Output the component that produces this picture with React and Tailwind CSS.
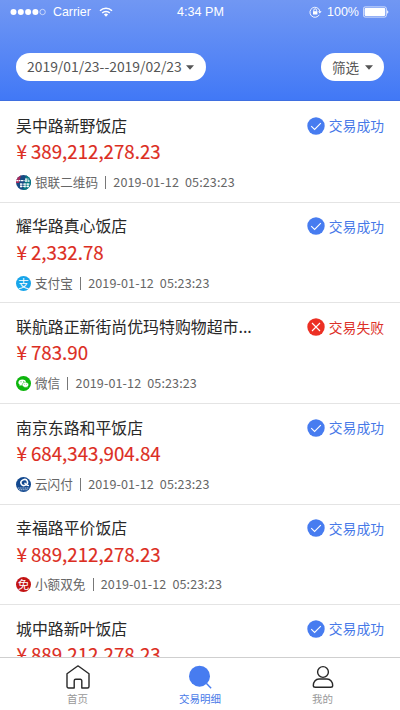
const transactions = [
  { id: 1, shop: '吴中路新野饭店', amount: '389,212,278.23', channel: 'unionpay', label: '银联二维码', success: true },
  { id: 2, shop: '耀华路真心饭店', amount: '2,332.78', channel: 'alipay', label: '支付宝', success: true },
  { id: 3, shop: '联航路正新街尚优玛特购物超市...', amount: '783.90', channel: 'wechat', label: '微信', success: false },
  { id: 4, shop: '南京东路和平饭店', amount: '684,343,904.84', channel: 'quickpass', label: '云闪付', success: true },
  { id: 5, shop: '幸福路平价饭店', amount: '889,212,278.23', channel: 'free', label: '小额双免', success: true },
  { id: 6, shop: '城中路新叶饭店', amount: '889,212,278.23', success: true },
];

function StatusBar() {
  return (
    <div className="grid h-[23px] grid-cols-3 items-center pl-[10px] pr-[11px] font-['Liberation_Sans',sans-serif] text-[12px] text-white">
      <div className="flex items-center">
        <svg width="36" height="8" viewBox="0 0 36 8" fill="white">
          <circle cx="3.5" cy="4" r="3" />
          <circle cx="10.8" cy="4" r="3" />
          <circle cx="18.1" cy="4" r="3" />
          <circle cx="25.4" cy="4" r="3" />
          <circle cx="32.6" cy="4" r="2.7" fill="none" stroke="white" strokeWidth="0.6" />
        </svg>
        <span className="ml-[7px] text-[12.4px] leading-5">Carrier</span>
        <svg className="ml-[8px]" width="14" height="10" viewBox="0 0 14 10" fill="none" stroke="white" strokeWidth="1.5">
          <path d="M1 3.7a8.6 8.6 0 0 1 12 0" />
          <path d="M3.2 6a5.4 5.4 0 0 1 7.6 0" />
          <path d="M7 9.7 4.9 7.6a3 3 0 0 1 4.2 0z" fill="white" stroke="none" />
        </svg>
      </div>
      <div className="pl-[2px] text-center text-[12.6px] leading-5">4:34 PM</div>
      <div className="flex items-center justify-end">
        <svg width="13" height="12" viewBox="0 0 13 12" fill="none" stroke="white">
          <path d="M10.3 8.8A5 5 0 1 1 10.8 5" strokeWidth="0.9" />
          <path d="M9 5.2h3.6l-1.8 2.2z" fill="white" stroke="none" />
          <rect x="4" y="5.2" width="4.4" height="3.3" fill="white" stroke="none" />
          <path d="M4.8 5.4V4.2a1.4 1.4 0 0 1 2.8 0v1.2" strokeWidth="0.9" />
        </svg>
        <span className="ml-[5px] text-[12.5px] leading-5">100%</span>
        <svg className="ml-[4px]" width="26" height="12" viewBox="0 0 26 12" fill="white">
          <rect x="0.4" y="0.9" width="23" height="10.2" rx="1.8" fill="none" stroke="white" strokeWidth="0.7" />
          <rect x="1.6" y="2.1" width="20.6" height="7.8" rx="0.8" />
          <path d="M24.2 4.2a2 2 0 0 1 0 3.6z" />
        </svg>
      </div>
    </div>
  );
}

function Caret() {
  return (
    <svg width="8" height="5" viewBox="0 0 8 5" fill="#555">
      <path d="M0 0.2h8L4 4.8z" />
    </svg>
  );
}

function ChannelIcon({ channel }) {
  if (channel === 'alipay') {
    return <span className="flex size-[15px] items-center justify-center rounded-full bg-[#18a5ea] text-[11px] leading-none text-white">支</span>;
  }
  if (channel === 'free') {
    return <span className="flex size-[15px] items-center justify-center rounded-full bg-[#c31414] text-[11.5px] leading-none text-white">免</span>;
  }
  if (channel === 'wechat') {
    return (
      <svg width="15" height="15" viewBox="0 0 15 15">
        <circle cx="7.5" cy="7.5" r="7.5" fill="#0cb50c" />
        <path d="M6.3 3.5c-2.2 0-3.9 1.3-3.9 3 0 .9.5 1.8 1.4 2.3l-.3 1.2 1.4-.7 1.4.2c2.1 0 3.9-1.3 3.9-3s-1.8-3-3.9-3z" fill="white" />
        <path d="M9.5 6.2c-1.9 0-3.3 1.1-3.3 2.6s1.4 2.6 3.3 2.6l1.1-.2 1.2.6-.3-1c.8-.5 1.2-1.2 1.2-2 0-1.5-1.4-2.6-3.2-2.6z" fill="white" stroke="#0cb50c" strokeWidth="0.5" />
        <g fill="#0cb50c">
          <circle cx="5" cy="5.7" r="0.5" />
          <circle cx="7.6" cy="5.7" r="0.5" />
          <circle cx="8.5" cy="8.2" r="0.4" />
          <circle cx="10.6" cy="8.2" r="0.4" />
        </g>
      </svg>
    );
  }
  if (channel === 'quickpass') {
    return (
      <svg width="15" height="15" viewBox="0 0 15 15">
        <circle cx="7.5" cy="7.5" r="7.5" fill="#12488f" />
        <ellipse cx="8.2" cy="5.5" rx="3.4" ry="2.9" fill="none" stroke="white" strokeWidth="1.5" transform="rotate(-25 8.2 5.5)" />
        <path d="M8.6 5.8c.6 1.7 1.8 2.7 4.4 2.9" stroke="white" strokeWidth="1.2" fill="none" />
        <path d="M1.8 11h11.5M3 12.7h9" stroke="#b9cbe2" strokeWidth="1.1" strokeDasharray="1.3 .5" />
      </svg>
    );
  }
  return (
    <svg width="15" height="15" viewBox="0 0 15 15">
      <defs>
        <clipPath id="unionpay">
          <circle cx="7.5" cy="7.5" r="7.5" />
        </clipPath>
      </defs>
      <g clipPath="url(#unionpay)">
        <path d="M0 0h15v15H0z" fill="#174a83" />
        <path d="M0 0h5L3 8H0z" fill="#a52a5c" />
        <path d="M10 0h5v15H7z" fill="#087b83" />
        <path d="M0 5.6h8.5M9 4.2h3.5M9 6h5" stroke="white" strokeWidth="1.3" strokeDasharray="2 .5" />
        <path d="M4 9.2h10M4 11.4h9" stroke="white" strokeWidth="1.2" strokeDasharray="2.5 .7" />
        <path d="M5 8.2v4.5M9 8.2v4.5M12 8.2v4.5" stroke="white" strokeWidth="0.8" />
      </g>
    </svg>
  );
}

function Status({ success }) {
  return (
    <div className={`flex h-5 items-center gap-[4px] text-[13.8px] ${success ? 'text-[#4779e8]' : 'text-[#dd3028]'}`}>
      <svg width="18" height="18" viewBox="0 0 18 18" fill="none" stroke="white" strokeWidth="1.1">
        <circle cx="9" cy="9" r="8.7" fill={success ? '#477cf0' : '#ec3024'} stroke="none" />
        {success ? <path d="M4.2 9.2 7.6 12.4 13.8 6.2" /> : <path d="m5 5 8 8M13 5l-8 8" />}
      </svg>
      <span>{success ? '交易成功' : '交易失败'}</span>
    </div>
  );
}

function TransactionRow({ item }) {
  return (
    <li className="h-[100.6px] shrink-0 border-b border-[#e4e4e4] px-4 pt-[13.6px]">
      <div className="flex items-center justify-between">
        <h2 className="h-5 text-[15.9px] leading-5 whitespace-nowrap text-[#282828]">{item.shop}</h2>
        <Status success={item.success} />
      </div>
      <div className="mt-[3.4px] flex h-6 items-center text-[18.7px] leading-6 text-[#dc2d22] [-webkit-text-stroke:0.15px_#dc2d22]">
        <span className="w-[15px] pl-[0.5px] text-[19px]">¥</span>
        <span>{item.amount}</span>
      </div>
      {item.channel && (
        <div className="mt-[9.4px] flex h-5 items-center text-[12.6px] whitespace-nowrap text-[#666]">
          <ChannelIcon channel={item.channel} />
          <span className="ml-[4px]">{item.label}</span>
          <span className="mx-[7.2px] h-[13px] w-px bg-[#777]" />
          <span className="tracking-[0.1px]">2019-01-12</span>
          <span className="ml-[6px] tracking-[0.1px]">05:23:23</span>
        </div>
      )}
    </li>
  );
}

function TabBar() {
  return (
    <nav className="grid h-[53px] shrink-0 grid-cols-[155px_90px_155px] border-t border-[#cfcfcf] bg-white text-[10.5px] text-[#999]">
      <button className="flex flex-col items-center pt-[7px]">
        <svg width="24" height="24" viewBox="0 0 24 24" fill="none" stroke="#282828" strokeWidth="1.4" strokeLinejoin="round">
          <path d="M1 8.8 11 1.5a1.5 1.5 0 0 1 2 0l10 7.300v12.700a1.500 1.500 0 0 1-1.500 1.500h-5.700v-7.200a1.500 1.500 0 0 0-1.500-1.500H9.700a1.500 1.500 0 0 0-1.500 1.500V23H2.500A1.500 1.500 0 0 1 1 21.500z" />
        </svg>
        <span className="mt-[2px] leading-4">首页</span>
      </button>
      <button className="flex flex-col items-center pt-[7px] text-[#4779e8]">
        <svg width="24" height="24" viewBox="0 0 24 24" fill="#477cf0">
          <circle cx="11.5" cy="11.2" r="10.5" />
          <path d="m18.5 18.500 4.600 4.800" stroke="#477cf0" strokeWidth="1.4" />
        </svg>
        <span className="mt-[2px] leading-4">交易明细</span>
      </button>
      <button className="flex flex-col items-center pt-[7px]">
        <svg width="24" height="24" viewBox="0 0 24 24" fill="none" stroke="#282828" strokeWidth="1.4">
          <circle cx="12" cy="7" r="5.4" />
          <path d="M8 14h8c3.500 0 5.700 3 5.700 6.500 0 1.200-.8 1.800-2 1.800H4.300c-1.200 0-2-.6-2-1.800C2.300 17 4.500 14 8 14z" />
        </svg>
        <span className="mt-[2px] leading-4">我的</span>
      </button>
    </nav>
  );
}

export default function App() {
  return (
    <div className="flex h-[710px] w-[400px] flex-col overflow-hidden bg-white font-['Noto_Sans_CJK_SC',sans-serif]">
      <header className="h-[101px] shrink-0 border-b border-[#3f6fe0] bg-linear-to-b from-[#7197f3] to-[#4178f6]">
        <StatusBar />
        <div className="mt-[30px] flex items-center justify-between px-4">
          <button className="flex h-7 w-[190px] items-center gap-[4px] rounded-full bg-white pl-[11px] text-[13.9px] text-[#555]">
            <span className="pb-[2px]">2019/01/23--2019/02/23</span>
            <Caret />
          </button>
          <button className="flex h-7 w-[63px] items-center gap-[6px] rounded-full bg-white pl-[11px] text-[13.6px] text-[#555]">
            <span>筛选</span>
            <Caret />
          </button>
        </div>
      </header>
      <ul className="flex min-h-0 flex-1 flex-col overflow-hidden pt-[1.2px]">
        {transactions.map((item) => (
          <TransactionRow key={item.id} item={item} />
        ))}
      </ul>
      <TabBar />
    </div>
  );
}
